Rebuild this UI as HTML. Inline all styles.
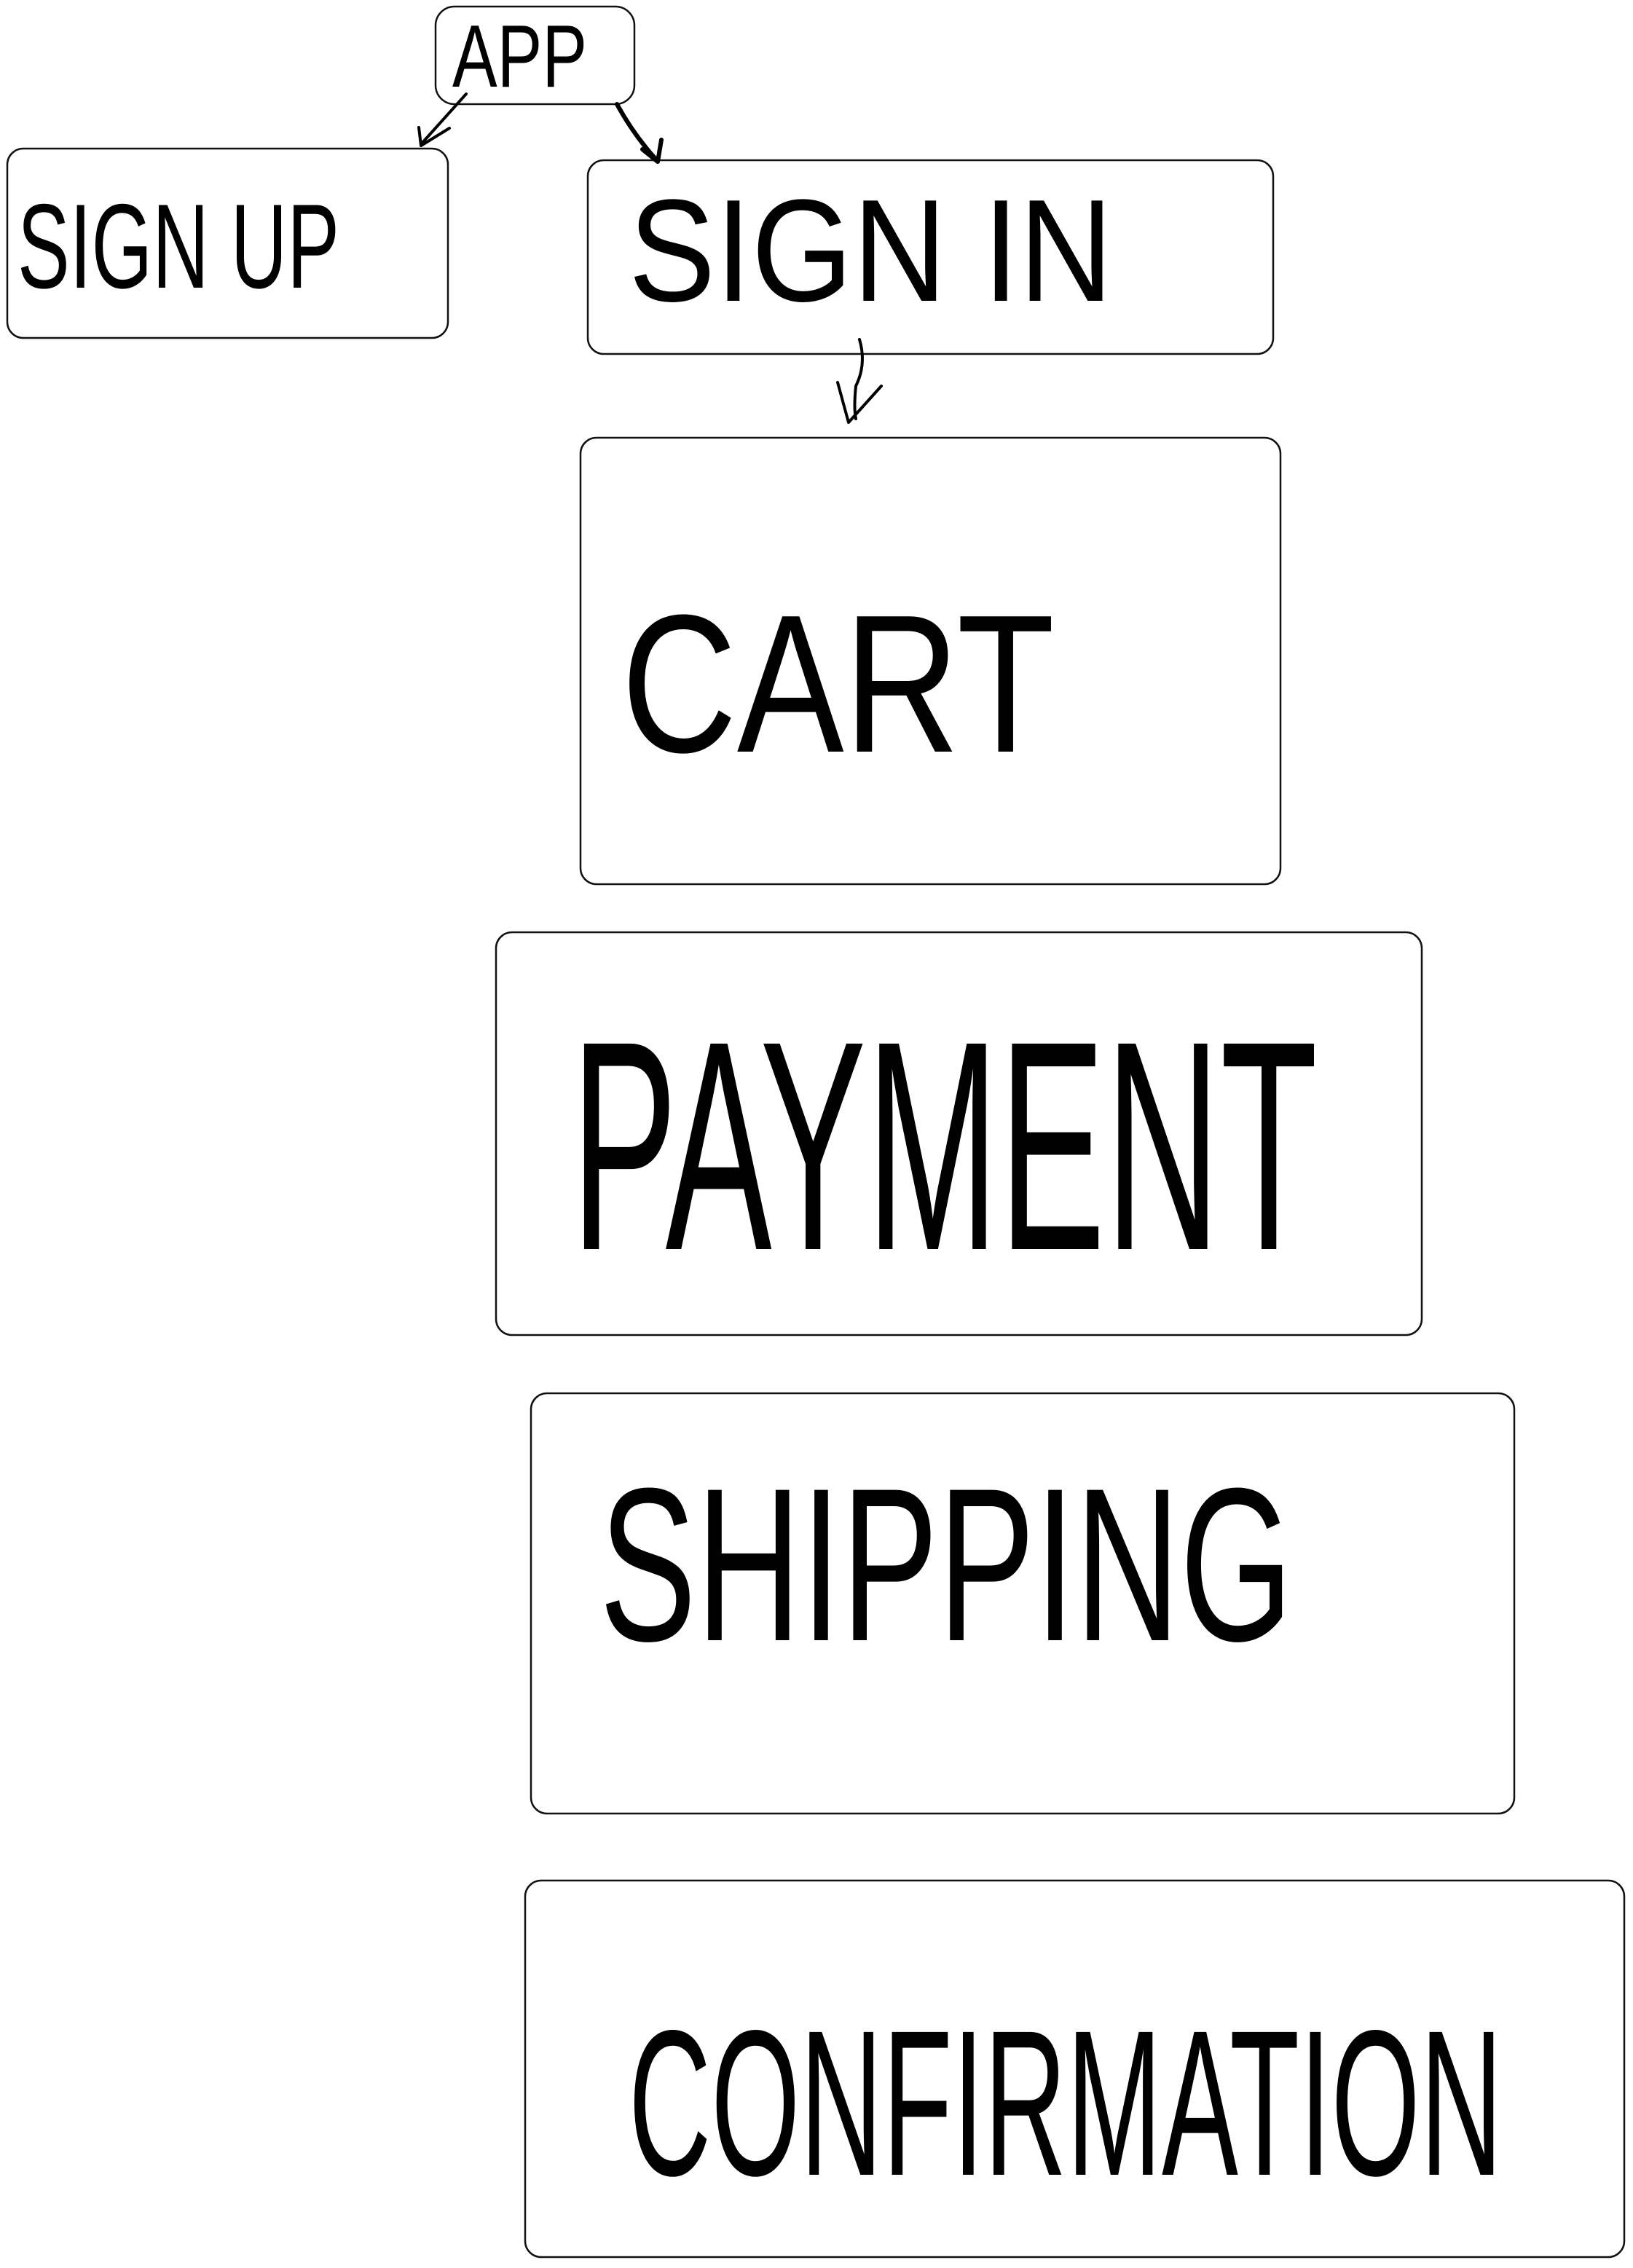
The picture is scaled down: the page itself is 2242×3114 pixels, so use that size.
<!DOCTYPE html>
<html><head><meta charset="utf-8"><style>
html,body{margin:0;padding:0;background:#fff;}
svg{display:block}
</style></head><body>
<svg width="2242" height="3114" viewBox="0 0 2242 3114" xmlns="http://www.w3.org/2000/svg">
<g fill="none" stroke="#111" stroke-width="2.5">
<rect x="598" y="9" width="273" height="134" rx="26"/>
<rect x="10" y="204" width="605" height="260" rx="22"/>
<rect x="807" y="220" width="941" height="266" rx="22"/>
<rect x="797" y="601" width="961" height="613" rx="22"/>
<rect x="681" y="1280" width="1271" height="553" rx="22"/>
<rect x="729" y="1913" width="1350" height="577" rx="22"/>
<rect x="721" y="2582" width="1509" height="517" rx="22"/>
</g>
<g fill="none" stroke="#000" stroke-width="4" stroke-linecap="round" stroke-linejoin="round">
<path d="M640 129 L578 198 M575 175 L578 200 L617 176"/>
<path d="M847 143 Q870 185 900 218 M882 205 L903 222 L908 192" stroke-width="6"/>
<path d="M1180 466 Q1190 500 1175 530 Q1172 560 1175 575 M1150 525 L1165 580 L1210 530"/>
</g>
<g font-family="Liberation Sans, sans-serif" fill="#000" lengthAdjust="spacingAndGlyphs">
<text x="621" y="119" font-size="122" textLength="185" lengthAdjust="spacingAndGlyphs">APP</text>
<text x="24" y="395" font-size="165" textLength="442" lengthAdjust="spacingAndGlyphs">SIGN UP</text>
<text x="863" y="413" font-size="200" textLength="665" lengthAdjust="spacingAndGlyphs">SIGN IN</text>
<text x="853" y="1032" font-size="270" textLength="595" lengthAdjust="spacingAndGlyphs">CART</text>
<text x="784" y="1715" font-size="410" textLength="1025" lengthAdjust="spacingAndGlyphs">PAYMENT</text>
<text x="823" y="2252" font-size="300" textLength="952" lengthAdjust="spacingAndGlyphs">SHIPPING</text>
<text x="863" y="2986" font-size="285" textLength="1200" lengthAdjust="spacingAndGlyphs">CONFIRMATION</text>
</g>
</svg>
</body></html>
